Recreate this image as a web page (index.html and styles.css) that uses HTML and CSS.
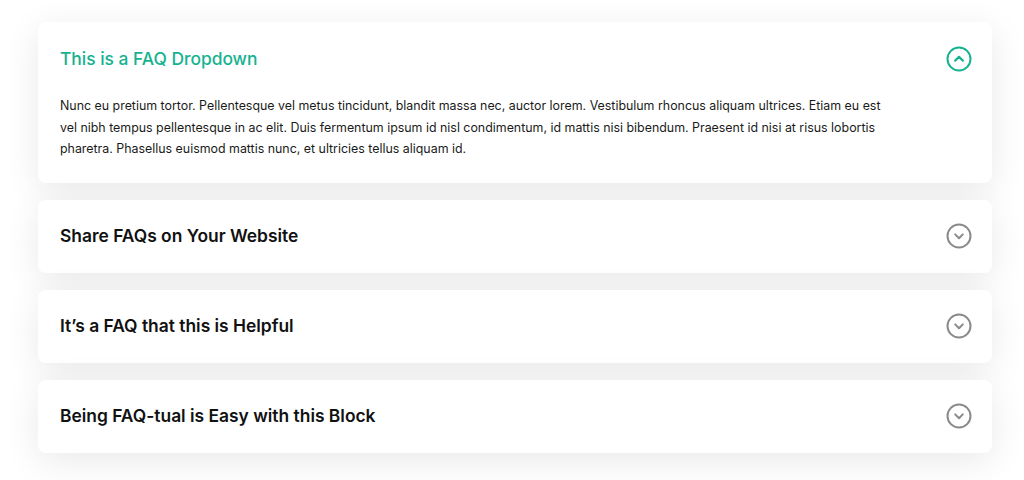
FILE: index.html
```html
<!DOCTYPE html>
<html>
<head>
<meta charset="utf-8">
<link rel="stylesheet" href="styles.css">
</head>
<body>
<div class="faq">
  <div class="item open">
    <div class="head">
      <h3 class="title">This is a FAQ Dropdown</h3>
      <svg class="icon" width="26" height="26" viewBox="0 0 26 26"><circle cx="13" cy="13" r="11.5" fill="none" stroke="currentColor" stroke-width="2"/><path d="M9.2 14.6 L13 10.8 L16.8 14.6" fill="none" stroke="currentColor" stroke-width="2.2" stroke-linecap="round" stroke-linejoin="round"/></svg>
    </div>
    <p class="body">Nunc eu pretium tortor. Pellentesque vel metus tincidunt, blandit massa nec, auctor lorem. Vestibulum rhoncus aliquam ultrices. Etiam eu est vel nibh tempus pellentesque in ac elit. Duis fermentum ipsum id nisl condimentum, id mattis nisi bibendum. Praesent id nisi at risus lobortis pharetra. Phasellus euismod mattis nunc, et ultricies tellus aliquam id.</p>
  </div>
  <div class="item">
    <div class="head">
      <h3 class="title">Share FAQs on Your Website</h3>
      <svg class="icon" width="26" height="26" viewBox="0 0 26 26"><circle cx="13" cy="13" r="11.5" fill="none" stroke="currentColor" stroke-width="2"/><path d="M9.2 11.4 L13 15.2 L16.8 11.4" fill="none" stroke="currentColor" stroke-width="2" stroke-linecap="round" stroke-linejoin="round"/></svg>
    </div>
  </div>
  <div class="item">
    <div class="head">
      <h3 class="title">It’s a FAQ that this is Helpful</h3>
      <svg class="icon" width="26" height="26" viewBox="0 0 26 26"><circle cx="13" cy="13" r="11.5" fill="none" stroke="currentColor" stroke-width="2"/><path d="M9.2 11.4 L13 15.2 L16.8 11.4" fill="none" stroke="currentColor" stroke-width="2" stroke-linecap="round" stroke-linejoin="round"/></svg>
    </div>
  </div>
  <div class="item">
    <div class="head">
      <h3 class="title">Being FAQ-tual is Easy with this Block</h3>
      <svg class="icon" width="26" height="26" viewBox="0 0 26 26"><circle cx="13" cy="13" r="11.5" fill="none" stroke="currentColor" stroke-width="2"/><path d="M9.2 11.4 L13 15.2 L16.8 11.4" fill="none" stroke="currentColor" stroke-width="2" stroke-linecap="round" stroke-linejoin="round"/></svg>
    </div>
  </div>
</div>
</body>
</html>
```
FILE: styles.css
```css
html, body {
  margin: 0;
  padding: 0;
  background: #ffffff;
}
body {
  font-family: Inter, "Noto Sans", sans-serif;
  color: #111;
  height: 480px;
  overflow: hidden;
}
.faq {
  width: 954px;
  margin: 22px 0 0 38px;
  display: flex;
  flex-direction: column;
  gap: 17px;
}
.item {
  background: #fff;
  border-radius: 8px;
  box-shadow: 0 8px 36px rgba(0, 0, 0, 0.09);
  padding: 0 20px 0 22px;
}
.head {
  height: 73px;
  display: flex;
  align-items: center;
  justify-content: space-between;
}
.title {
  margin: -1px 0 0 0;
  font-size: 17.4px;
  font-weight: 600;
  color: #111;
}
.open .title {
  color: #15b28f;
  font-weight: 500;
}
.icon {
  color: #8a8a8a;
  display: block;
}
.open .icon {
  color: #15b28f;
}
.body {
  margin: 0;
  padding: 0 77px 23px 0;
  font-size: 12.4px;
  line-height: 21.5px;
  color: #1a1a1a;
}
```
